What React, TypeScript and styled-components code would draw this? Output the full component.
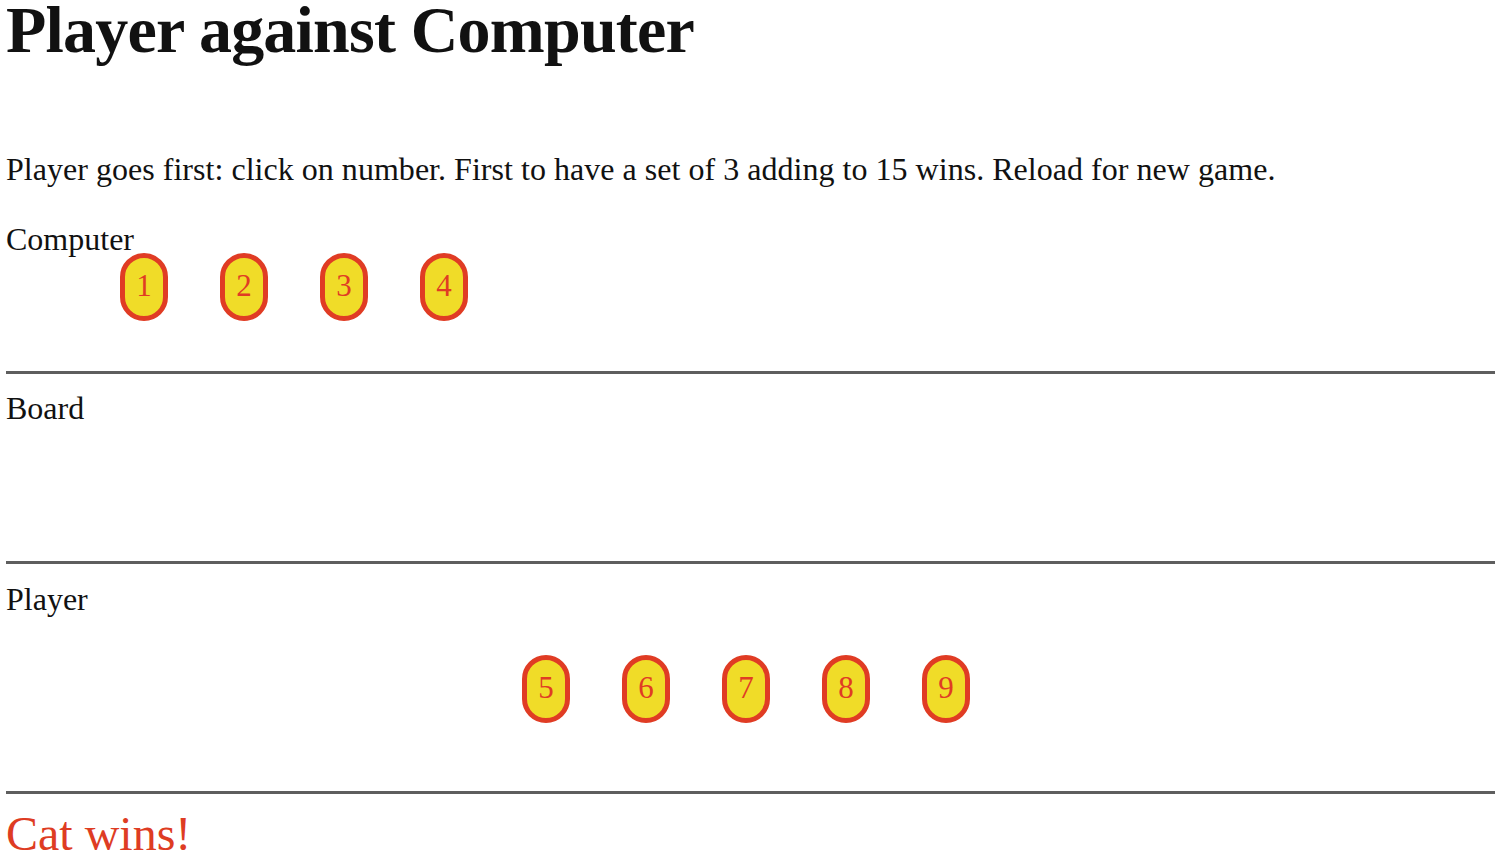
import React from "react";
import styled, { createGlobalStyle } from "styled-components";

const Global = createGlobalStyle`
  html, body { margin: 0; padding: 0; background: #ffffff; }
  body { font-family: "Liberation Serif", "Times New Roman", serif; color: #111; }
`;

const Page = styled.div`
  padding: 0 5px 0 6px;
`;

const Title = styled.h1`
  margin: 0;
  padding-top: 2px;
  font-size: 66px;
  line-height: 56px;
  font-weight: bold;
  letter-spacing: -0.8px;
  color: #111;
`;

const Intro = styled.p`
  margin: 93px 0 0;
  font-size: 32px;
  line-height: 37px;
  letter-spacing: 0.03px;
`;

const Label = styled.div<{ $top: number }>`
  margin-top: ${(p) => p.$top}px;
  font-size: 32px;
  line-height: 37px;
`;

const PieceRow = styled.div<{ $left: number; $top: number }>`
  display: flex;
  gap: 52px;
  margin-top: ${(p) => p.$top}px;
  padding-left: ${(p) => p.$left}px;
`;

const Piece = styled.div`
  box-sizing: border-box;
  width: 48px;
  height: 68px;
  padding-bottom: 4px;
  border: 5px solid #e03c24;
  border-radius: 24px;
  background: #f0dc28;
  color: #e03c24;
  font-size: 31px;
  display: flex;
  align-items: center;
  justify-content: center;
  line-height: 1;
`;

const Rule = styled.hr<{ $top: number }>`
  margin: ${(p) => p.$top}px 0 0;
  border: none;
  height: 3px;
  background: #5e5e5e;
`;

const Result = styled.div`
  margin-top: 12px;
  font-size: 48px;
  line-height: 55px;
  color: #de3c23;
`;

export default function App() {
  return (
    <>
      <Global />
      <Page>
        <Title>Player against Computer</Title>
        <Intro>
          Player goes first: click on number. First to have a set of 3 adding to 15 wins. Reload for new game.
        </Intro>
        <Label $top={33}>Computer</Label>
        <PieceRow $left={114} $top={-5}>
          {[1, 2, 3, 4].map((n) => (
            <Piece key={n}>{n}</Piece>
          ))}
        </PieceRow>
        <Rule $top={50} />
        <Label $top={16}>Board</Label>
        <Rule $top={134} />
        <Label $top={17}>Player</Label>
        <PieceRow $left={516} $top={37}>
          {[5, 6, 7, 8, 9].map((n) => (
            <Piece key={n}>{n}</Piece>
          ))}
        </PieceRow>
        <Rule $top={68} />
        <Result>Cat wins!</Result>
      </Page>
    </>
  );
}
